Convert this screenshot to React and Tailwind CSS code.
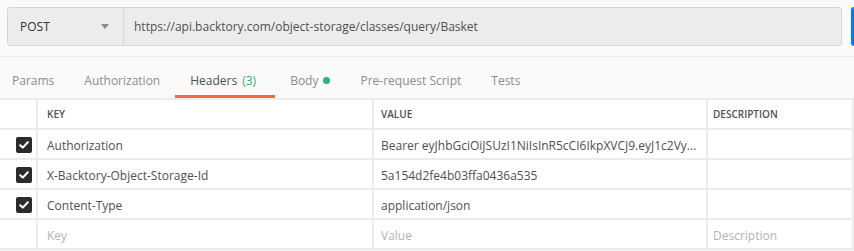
import React from 'react';

const tabs = [
  { label: 'Params' },
  { label: 'Authorization' },
  { label: 'Headers', count: '(3)', active: true },
  { label: 'Body', dot: true },
  { label: 'Pre-request Script' },
  { label: 'Tests' },
];

const headers = [
  { key: 'Authorization', value: 'Bearer eyJhbGciOiJSUzI1NiIsInR5cCI6IkpXVCJ9.eyJ1c2Vy...' },
  { key: 'X-Backtory-Object-Storage-Id', value: '5a154d2fe4b03ffa0436a535' },
  { key: 'Content-Type', value: 'application/json' },
];

function Checkbox() {
  return (
    <div className="w-4 h-4 rounded-[2px] bg-[#2b2b2b] flex items-center justify-center">
      <svg width="10" height="8" viewBox="0 0 10 8" fill="none">
        <path d="M1.2 4.2 L3.8 6.6 L8.8 1.3" stroke="white" strokeWidth="2" strokeLinecap="round" strokeLinejoin="round" />
      </svg>
    </div>
  );
}

function Row({ children }) {
  return (
    <div className="grid grid-cols-[38px_336px_334px_146px] h-[30px] border-b-2 border-[#ececec]">
      {children}
    </div>
  );
}

export default function App() {
  return (
    <div className="w-[854px] h-[251px] overflow-hidden bg-[#fafafa] text-[12px] text-[#505050]" style={{ fontFamily: '"Open Sans", "Noto Sans", sans-serif' }}>
      {/* request bar */}
      <div className="flex pt-[7px] pl-[7px] pb-[10px] border-b border-[#ebebeb]">
        <div className="flex h-[39px] w-[835px] shrink-0 bg-[#ececec] border border-[#d6d6d6] rounded-[3px]">
          <div className="w-[116px] flex items-center justify-between pl-[12px] pr-[14px] border-r border-[#d6d6d6]">
            <span className="text-[#333]">POST</span>
            <svg width="8" height="5" viewBox="0 0 8 5"><path d="M0 0 L8 0 L4 5 Z" fill="#8a8a8a" /></svg>
          </div>
          <div className="flex-1 flex items-center pl-[10px] text-[#505050]">
            https://api.backtory.com/object-storage/classes/query/Basket
          </div>
        </div>
        <div className="ml-[9px] h-[39px] w-[40px] bg-[#097bed] rounded-[3px] shrink-0" />
      </div>

      {/* tabs */}
      <div className="flex h-[41px]">
        {tabs.map((t, i) => (
          <div
            key={t.label}
            className={`flex items-start pt-[15px] pr-[15px] border-b-[3px] ${i === 0 ? 'pl-3' : 'pl-[15px]'} ${t.active ? 'border-[#f26b3a] text-[#505050] pr-[19px]' : 'border-transparent text-[#8c8c8c]'}`}
          >
            <span>{t.label}</span>
            {t.count && <span className="ml-[5px] text-[#26b47f]">{t.count}</span>}
            {t.dot && <span className="ml-[5px] mt-[5px] w-[7px] h-[7px] rounded-full bg-[#26b47f]" />}
          </div>
        ))}
      </div>

      {/* table */}
      <div className="border-t-2 border-[#ececec] bg-white">
        <Row>
          <div className="border-r-2 border-[#ececec]" />
          <div className="border-r-2 border-[#ececec] flex items-center pt-[1px] pl-[9px] text-[10px] font-semibold text-[#505050]">KEY</div>
          <div className="border-r-2 border-[#ececec] flex items-center pt-[1px] pl-[7px] text-[10px] font-semibold text-[#505050]">VALUE</div>
          <div className="border-r-2 border-[#ececec] flex items-center pt-[1px] pl-[5px] text-[10px] font-semibold text-[#505050]">DESCRIPTION</div>
        </Row>
        {headers.map((h) => (
          <Row key={h.key}>
            <div className="border-r-2 border-[#ececec] flex items-center justify-end pr-[4px] pt-[2px]">
              <Checkbox />
            </div>
            <div className="border-r-2 border-[#ececec] flex items-center pt-[3px] pl-[9px] whitespace-nowrap">{h.key}</div>
            <div className="border-r-2 border-[#ececec] flex items-center pt-[3px] pl-[7px] pr-[6px] min-w-0 whitespace-nowrap overflow-hidden">
              {h.value}
            </div>
            <div className="border-r-2 border-[#ececec]" />
          </Row>
        ))}
        <Row>
          <div className="border-r-2 border-[#ececec]" />
          <div className="border-r-2 border-[#ececec] flex items-center pt-[3px] pl-[9px] text-[#b3b3b3]">Key</div>
          <div className="border-r-2 border-[#ececec] flex items-center pt-[3px] pl-[7px] text-[#b3b3b3]">Value</div>
          <div className="border-r-2 border-[#ececec] flex items-center pt-[3px] pl-[5px] text-[#b3b3b3]">Description</div>
        </Row>
      </div>
    </div>
  );
}
